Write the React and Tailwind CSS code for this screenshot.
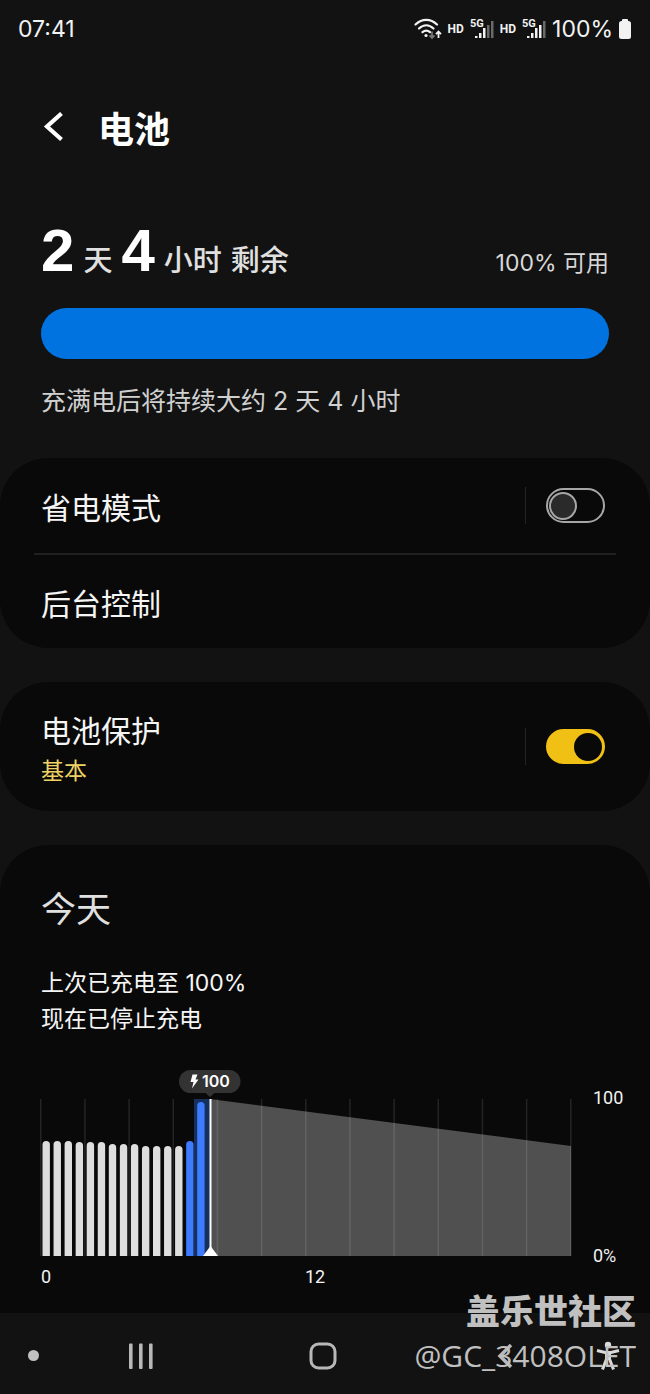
import React, { useState } from 'react';

const BARS = [115, 115, 115, 114, 114, 114, 112, 112, 112, 110, 110, 110, 110, 115, 154];
const GRID_LINES = [0, 1, 2, 3, 4, 5, 6, 7, 8, 9, 10, 11, 12];

function WifiIcon() {
  return (
    <svg width="28" height="22" viewBox="0 0 28 22" fill="none" aria-hidden="true">
      <path d="M1.5 6.5C8 0.2 16.500 0.200 23 6.500" stroke="#F2F2F2" strokeWidth="2.200" strokeLinecap="round" />
      <path d="M5 10.500C9.500 6.200 15 6.200 19.500 10.500" stroke="#F2F2F2" strokeWidth="2.200" strokeLinecap="round" />
      <path d="M8.500 14.200C11 12 13.500 12 16 14.200" stroke="#F2F2F2" strokeWidth="2.200" strokeLinecap="round" />
      <circle cx="12" cy="17.500" r="1.600" fill="#F2F2F2" />
      <path d="M18 13.500V19.500M15.500 17.300L18 20L20.500 17.300" stroke="#777777" strokeWidth="1.800" />
      <path d="M24.500 20V14M22 16.200L24.500 13.500L27 16.200" stroke="#F2F2F2" strokeWidth="1.800" />
    </svg>
  );
}

function SignalIcon({ level }) {
  const heights = [2, 5, 10, 13, 17];
  return (
    <svg width="26" height="22" viewBox="0 0 26 22" aria-hidden="true">
      <text x="1" y="9" fontSize="11" fontWeight="700" fill="#F2F2F2" fontFamily="Roboto, sans-serif">5G</text>
      {heights.map((h, i) => (
        <rect key={h} x={6 + i * 4} y={20 - h} width="2.500" height={h} fill={i < level ? '#F2F2F2' : '#6A6A6A'} />
      ))}
    </svg>
  );
}

function StatusBar() {
  return (
    <div className="flex h-[58px] items-center justify-between px-[18px] text-[#f2f2f2]">
      <span className="text-[23px]">07:41</span>
      <div className="flex items-center gap-[5px]">
        <WifiIcon />
        <span className="font-[Roboto] text-xs font-bold">HD</span>
        <SignalIcon level={3} />
        <span className="font-[Roboto] text-xs font-bold">HD</span>
        <SignalIcon level={4} />
        <span className="text-[23px]">100%</span>
        <svg width="14" height="20" viewBox="0 0 14 20" fill="#F2F2F2" aria-hidden="true">
          <rect x="4" y="0" width="6" height="4" rx="1" />
          <rect x="1" y="2" width="12" height="18" rx="2.500" />
        </svg>
      </div>
    </div>
  );
}

function Toggle({ id, checked, onChange }) {
  return (
    <div className="flex items-center border-l border-[#232323] pl-5">
      <input
        id={id}
        type="checkbox"
        role="switch"
        checked={checked}
        onChange={(e) => onChange(e.target.checked)}
        className="my-px flex h-[35px] w-[59px] cursor-pointer appearance-none items-center rounded-full border-2 border-[#a6a6a6] px-px before:block before:size-7 before:rounded-full before:border-2 before:border-[#a6a6a6] before:bg-[#2a2a2a] checked:justify-end checked:border-[#f0c014] checked:bg-[#f0c014] checked:before:border-[#090909] checked:before:bg-[#090909]"
      />
    </div>
  );
}

function UsageChart() {
  return (
    <svg className="block w-full" viewBox="0 0 584 220" role="img" aria-label="电池电量">
      {/* Forecast */}
      <polygon points="170,30 531,77 531,187 170,187" fill="#505050" />
      {GRID_LINES.map((i) => (
        <rect key={i} x={i * 44.17} y="30" width="1.500" height="157" fill="#FFFFFF" opacity="0.11" />
      ))}

      {/* Charging period */}
      <rect x="154" y="30" width="16" height="157" fill="#15305F" />
      {BARS.map((h, i) => {
        const x = 2.5 + i * 11.05;
        return (
          <path
            key={i}
            d={`M${x} 187V${190.700 - h}a3.700 3.700 0 0 1 7.400 0V187Z`}
            fill={i > 12 ? '#3D7BFF' : '#DEDEDE'}
          />
        );
      })}

      {/* Current time */}
      <rect x="169.500" y="30" width="2" height="157" fill="#FFFFFF" />
      <path d="M163 187L170.500 177L178 187Z" fill="#FFFFFF" />
      <path d="M165 23.500H175L170 28Z" fill="#333333" />
      <rect x="139" y="1" width="61.500" height="23" rx="11.500" fill="#333333" />
      <path d="M152.500 5.500H157.500L155.500 10.500H158.500L152 19.500L153.500 13H150.500Z" fill="#FFFFFF" />
      <text x="162" y="18" fontSize="16" fontWeight="600" fill="#FFFFFF" fontFamily="Inter, sans-serif">100</text>

      <g fontSize="18" fill="#F2F2F2" fontFamily="Roboto, sans-serif">
        <text x="553" y="35">100</text>
        <text x="553" y="193">0%</text>
        <text x="1" y="214">0</text>
        <text x="265" y="214">12</text>
      </g>
    </svg>
  );
}

function NavBar() {
  return (
    <nav className="grid h-[81px] grid-cols-[50px_1fr_1fr_1fr_54px] items-center bg-[#121212] pt-1 text-[#b8b8b8]">
      <button aria-label="固定" className="flex justify-end pr-[11px]">
        <span className="size-[11px] rounded-full bg-[#c0c0c0]" />
      </button>
      <button aria-label="最近" className="flex justify-center">
        <svg width="28" height="28" viewBox="0 0 28 28" fill="currentColor">
          <rect x="2" y="1.500" width="3.600" height="25.500" rx="1" />
          <rect x="12" y="1.500" width="3.600" height="25.500" rx="1" />
          <rect x="22" y="1.500" width="3.600" height="25.500" rx="1" />
        </svg>
      </button>
      <button aria-label="主页" className="flex justify-center">
        <svg width="28" height="28" viewBox="0 0 28 28" fill="none" stroke="currentColor" strokeWidth="3">
          <rect x="2" y="2" width="24" height="24" rx="7.500" />
        </svg>
      </button>
      <button aria-label="返回" className="flex justify-center">
        <svg width="28" height="28" viewBox="0 0 28 28" fill="none" stroke="currentColor" strokeWidth="3.500">
          <path d="M20 3L9 14L20 25" />
        </svg>
      </button>
      <button aria-label="辅助功能" className="flex">
        <svg width="24" height="30" viewBox="0 0 24 30" fill="none" stroke="#DADADA" strokeWidth="3">
          <circle cx="12" cy="4" r="3.200" fill="#DADADA" stroke="none" />
          <path d="M1 9.500L9 11.500H15L23 9.500" />
          <path d="M12 10V19" strokeWidth="6" />
          <path d="M10.500 18L6.500 28.500M13.500 18L17.500 28.500" />
        </svg>
      </button>
    </nav>
  );
}

function App() {
  const [powerSaving, setPowerSaving] = useState(false);
  const [protection, setProtection] = useState(true);

  return (
    <div
      lang="zh-CN"
      className="relative min-h-screen overflow-hidden bg-[#121212] font-[Inter,'Noto_Sans_CJK_SC',sans-serif] text-[#f5f5f5]"
    >
      <StatusBar />

      <header className="flex h-[140px] items-center gap-8 pl-[42px]">
        <button aria-label="返回">
          <svg width="24" height="32" viewBox="0 0 24 32" fill="none" stroke="#FFFFFF" strokeWidth="4.200">
            <path d="M19.500 1.500L5 14.500L19.500 27.500" />
          </svg>
        </button>
        <h1 className="pt-1 text-4xl font-bold text-white">电池</h1>
      </header>

      {/* Remaining time */}
      <section className="px-[41px] pb-[39px]">
        <div className="flex h-[110px] items-baseline justify-between pt-[23px]">
          <p className="flex items-baseline gap-[9px] text-[29px] font-medium text-[#e0e0e0]">
            <strong className="font-['Liberation_Sans'] text-6xl font-bold text-white">2</strong>
            <span>天</span>
            <strong className="font-['Liberation_Sans'] text-6xl font-bold text-white">4</strong>
            <span>小时</span>
            <span>剩余</span>
          </p>
          <span className="text-[23px] text-[#d8d8d8]">100% 可用</span>
        </div>
        <div className="h-[51px] rounded-full bg-[#0073e0]" />
        <p className="mt-6 text-[25px] leading-9 text-[#d0d0d0]">充满电后将持续大约 2 天 4 小时</p>
      </section>

      <main className="flex flex-col gap-[34px]">
        <section className="rounded-[48px] bg-[#090909]">
          <div className="flex h-[95px] items-center justify-between pr-[45px] pl-[41px]">
            <label htmlFor="power-saving" className="pt-1 text-3xl">省电模式</label>
            <Toggle id="power-saving" checked={powerSaving} onChange={setPowerSaving} />
          </div>
          <div className="mx-[34px] h-0.5 bg-[#202020]" />
          <button className="flex h-[93px] w-full items-center pt-1 pl-[41px] text-3xl">后台控制</button>
        </section>

        <section className="flex h-[129px] items-center justify-between rounded-[48px] bg-[#090909] pr-[45px] pl-[41px]">
          <label htmlFor="protection" className="flex flex-col pt-1">
            <span className="text-3xl leading-11">电池保护</span>
            <span className="text-[23px] leading-9 text-[#f0d264]">基本</span>
          </label>
          <Toggle id="protection" checked={protection} onChange={setProtection} />
        </section>

        <section className="h-[468px] rounded-t-[48px] bg-[#090909] pt-10 pr-[26px] pl-10">
          <h2 className="pl-px text-[35px] leading-12 text-[#e0e0e0]">今天</h2>
          <p className="mt-8 pl-px text-[23px] leading-9">
            上次已充电至 100%
            <br />
            现在已停止充电
          </p>
          <div className="mt-8">
            <UsageChart />
          </div>
        </section>
      </main>

      <NavBar />

      {/* Community signature */}
      <div className="pointer-events-none absolute right-[14px] bottom-[18px] text-right text-[#c0c0c0]">
        <p className="text-[34px] leading-12 font-black">盖乐世社区</p>
        <p className="font-['Open_Sans'] text-[30px] leading-10">@GC_3408OLET</p>
      </div>
    </div>
  );
}

export default App;
